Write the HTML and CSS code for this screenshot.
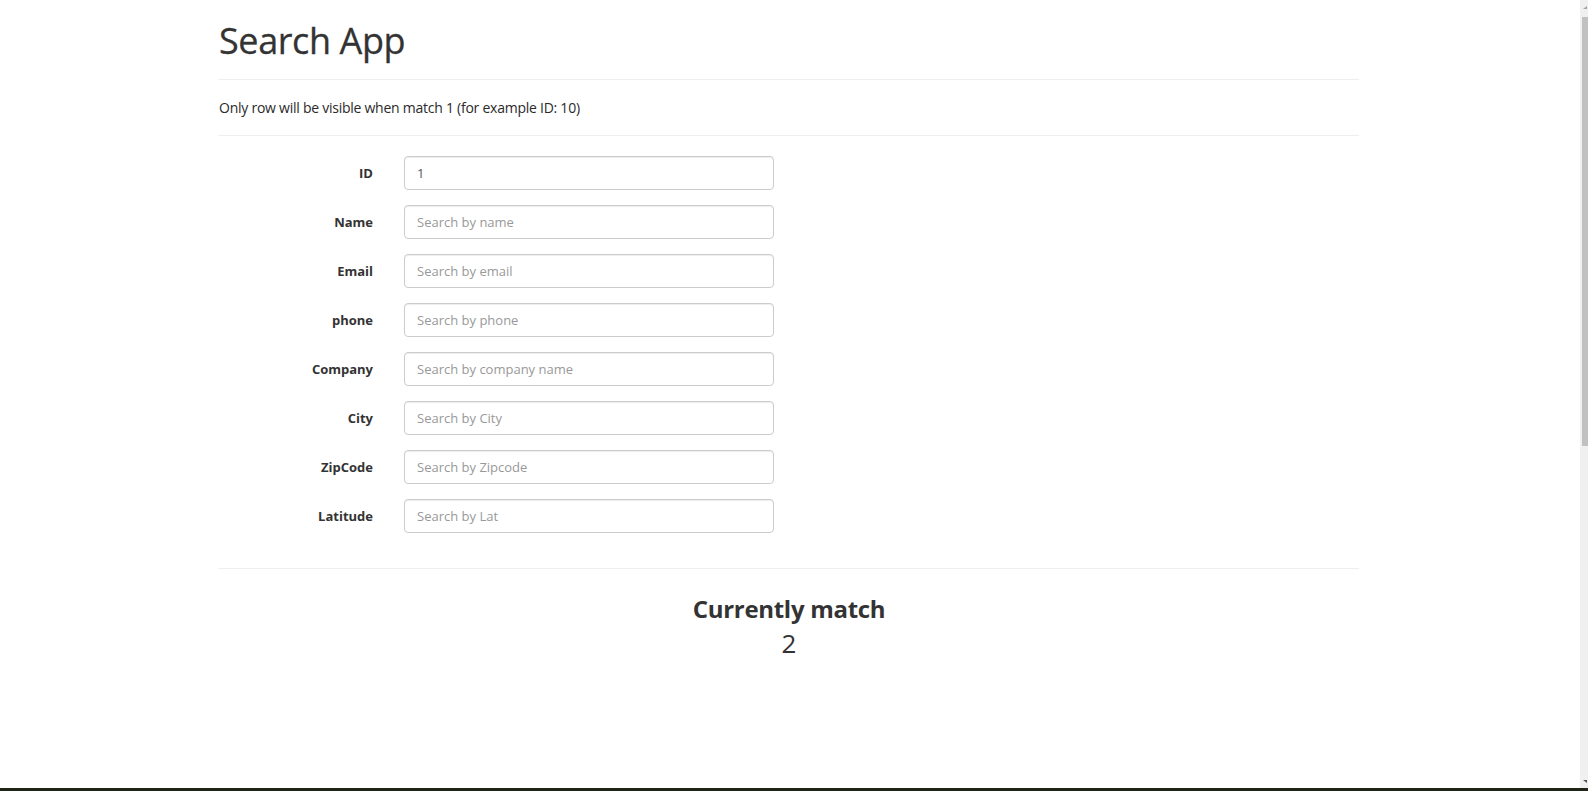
FILE: index.html
```html
<!DOCTYPE html>
<html lang="en">
<head>
<meta charset="utf-8">
<title>Search App</title>
<link rel="stylesheet" href="styles.css">
</head>
<body>
<div class="screen">
  <div class="main">
    <div class="viewport">
      <div class="container">
        <div class="page-header">
          <h1 class="title">Search App</h1>
        </div>
        <p class="hint">Only row will be visible when match 1 (for example ID: 10)</p>
        <form class="search-form">
          <div class="form-group">
            <label class="form-label" for="f-id">ID</label>
            <input class="form-control" id="f-id" type="text" value="1">
          </div>
          <div class="form-group">
            <label class="form-label" for="f-name">Name</label>
            <input class="form-control" id="f-name" type="text" placeholder="Search by name">
          </div>
          <div class="form-group">
            <label class="form-label" for="f-email">Email</label>
            <input class="form-control" id="f-email" type="text" placeholder="Search by email">
          </div>
          <div class="form-group">
            <label class="form-label" for="f-phone">phone</label>
            <input class="form-control" id="f-phone" type="text" placeholder="Search by phone">
          </div>
          <div class="form-group">
            <label class="form-label" for="f-company">Company</label>
            <input class="form-control" id="f-company" type="text" placeholder="Search by company name">
          </div>
          <div class="form-group">
            <label class="form-label" for="f-city">City</label>
            <input class="form-control" id="f-city" type="text" placeholder="Search by City">
          </div>
          <div class="form-group">
            <label class="form-label" for="f-zip">ZipCode</label>
            <input class="form-control" id="f-zip" type="text" placeholder="Search by Zipcode">
          </div>
          <div class="form-group">
            <label class="form-label" for="f-lat">Latitude</label>
            <input class="form-control" id="f-lat" type="text" placeholder="Search by Lat">
          </div>
        </form>
        <div class="result">
          <h3 class="result-title">Currently match</h3>
          <div class="result-count">2</div>
        </div>
      </div>
    </div>
    <div class="scrollbar">
      <div class="sb-arrow sb-up"></div>
      <div class="sb-track"><div class="sb-thumb"></div></div>
      <div class="sb-arrow sb-down"></div>
    </div>
  </div>
  <div class="bottom-edge"></div>
</div>
</body>
</html>
```

FILE: styles.css
```css
* { box-sizing: border-box; }
html, body {
  margin: 0;
  padding: 0;
  height: 100%;
  overflow: hidden;
  background: #fff;
}
body {
  font-family: "Open Sans", "Noto Sans", sans-serif;
  font-size: 14px;
  line-height: 20px;
  color: #333;
}
.screen {
  display: flex;
  flex-direction: column;
  height: 100vh;
}
.main {
  flex: 1;
  display: flex;
  min-height: 0;
}
.viewport {
  flex: 1;
  padding-right: 2px;
}
.container {
  width: 1140px;
  margin: 0 auto;
}
.page-header {
  border-bottom: 1px solid #eee;
  padding-bottom: 9px;
}
.title {
  margin: 21px 0 9px;
  font-size: 36px;
  font-weight: 400;
  line-height: 40px;
  letter-spacing: -0.4px;
  -webkit-text-stroke: 0.3px #333;
}
.hint {
  margin: 0;
  padding: 18px 0 17px;
  border-bottom: 1px solid #eee;
  font-size: 14px;
  font-weight: 500;
  letter-spacing: -0.25px;
  color: #2a2a2a;
}
.search-form {
  padding: 20px 0 20px;
  border-bottom: 1px solid #eee;
}
.form-group {
  display: flex;
  align-items: center;
  gap: 31px;
  margin-bottom: 15px;
}
.form-label {
  width: 154px;
  text-align: right;
  font-weight: 700;
  font-size: 13px;
}
.form-control {
  width: 370px;
  height: 34px;
  padding: 6px 12px;
  border: 1px solid #ccc;
  border-radius: 4px;
  font-family: inherit;
  font-size: 13px;
  color: #555;
  background: #fff;
  box-shadow: inset 0 1px 1px rgba(0,0,0,.075);
}
.form-control::placeholder { color: #999; }
.result {
  text-align: center;
  padding-top: 26px;
}
.result-title {
  margin: 0;
  font-size: 24px;
  line-height: 28px;
  font-weight: 700;
  letter-spacing: -0.3px;
}
.result-count {
  margin-top: 5px;
  font-size: 26px;
  line-height: 30px;
  font-weight: 400;
}
.scrollbar {
  width: 8px;
  background: #f0f0f0;
  display: flex;
  flex-direction: column;
}
.sb-arrow {
  height: 14px;
  display: flex;
  justify-content: flex-end;
  align-items: center;
}
.sb-up::after {
  content: "";
  border-left: 4px solid transparent;
  border-bottom: 3px solid #a3a3a3;
  margin-right: 1px;
}
.sb-down::after {
  content: "";
  border-left: 4px solid transparent;
  border-top: 3px solid #505050;
  margin-right: 1px;
}
.sb-track {
  flex: 1;
  padding: 3px 0 0 2px;
}
.sb-thumb {
  height: 429px;
  background: #c1c1c1;
}
.bottom-edge {
  height: 3px;
  background: #1f2418;
}
```
